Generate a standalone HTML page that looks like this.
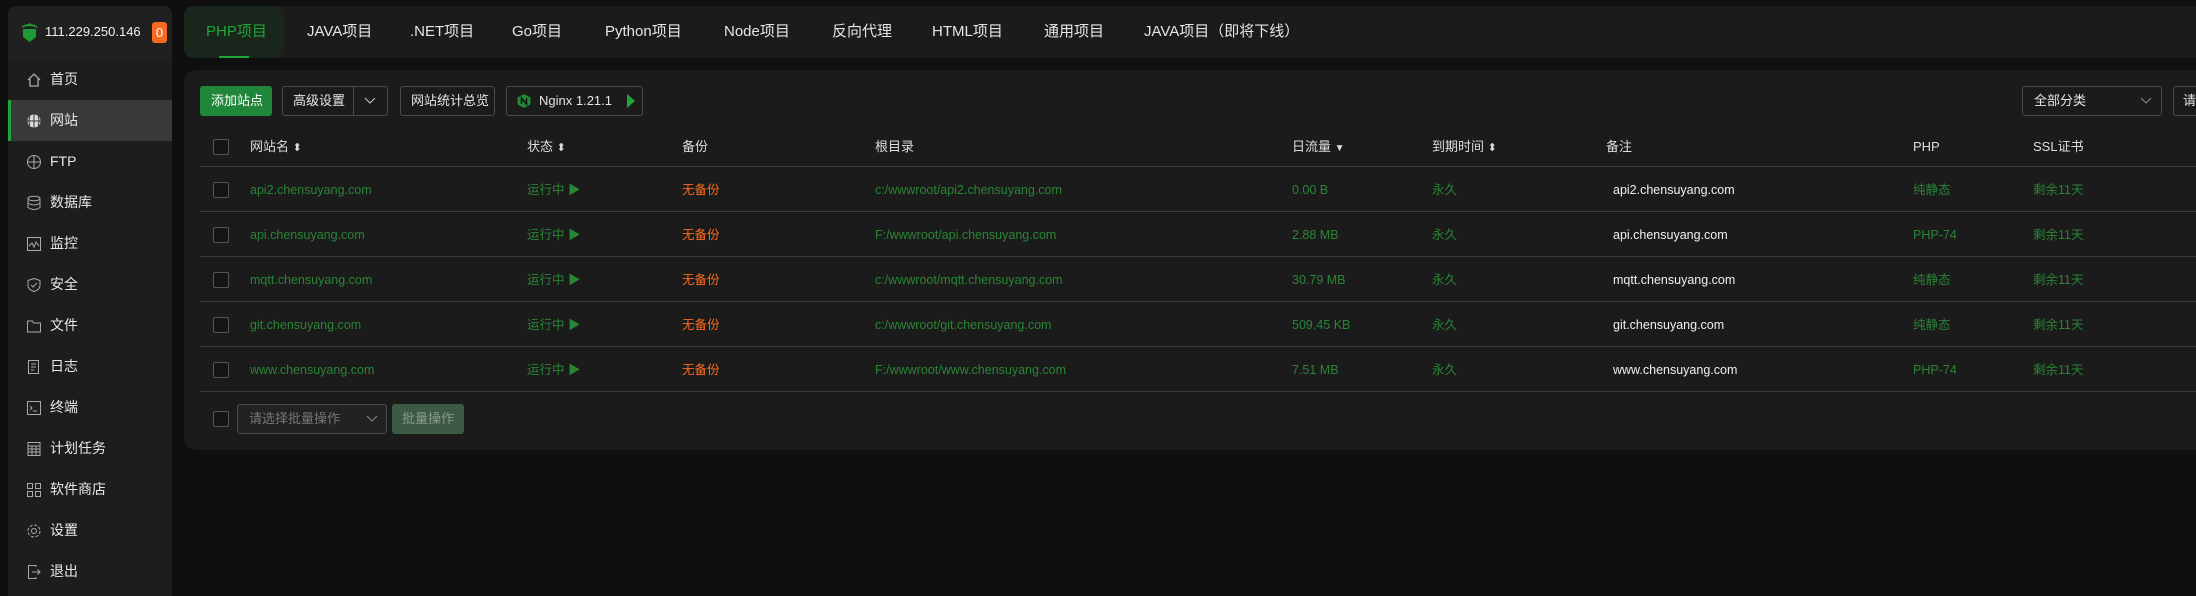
<!DOCTYPE html><html><head><meta charset="utf-8"><style>
*{margin:0;padding:0;box-sizing:border-box}
body{width:2196px;height:584px;background:#0f0f0f;font-family:"Liberation Sans","Noto Sans CJK SC",sans-serif;position:relative;overflow:hidden;color:#ddd}
.a{position:absolute;white-space:nowrap}
#sb{left:8px;top:6px;width:164px;height:590px;background:#1d1d1d;border-radius:8px 8px 0 0}
.mi{position:absolute;left:0;width:164px;height:41px;font-size:14px;color:#e8e8e8;line-height:41px;padding-left:42px}
.mi svg{position:absolute;left:18px;top:13px}
#tabs{left:184px;top:6px;width:2012px;height:52px;background:#1b1b1b;border-radius:10px 0 0 10px}
.tab{position:absolute;top:0;line-height:52px;font-size:15px;color:#e6e6e6}
#pn{left:184px;top:70px;width:2012px;height:380px;background:#1b1b1b;border-radius:12px 0 0 12px}
.btn{position:absolute;top:16px;height:30px;border:1px solid #4a4a4a;border-radius:3px;font-size:13px;line-height:28px;color:#e6e6e6;padding:0 10px}
.cb{position:absolute;left:29px;width:16px;height:16px;border:1px solid #555;border-radius:2px;background:#151515}
.hl{position:absolute;left:16px;right:0;height:1px;background:#3a3a3a}
.t{position:absolute;font-size:12.5px;line-height:16px;color:#2a8535}
.h{position:absolute;font-size:13px;line-height:16px;color:#ddd}
.o{color:#ff6a1c}.w{color:#f0f0f0}
</style></head><body>
<div class="a" id="sb">
<div class="a" style="left:0;top:0;width:164px;height:53px;background:#202020;border-radius:8px 8px 0 0"></div>
<svg class="a" style="left:13px;top:16px" width="17" height="21" viewBox="0 0 17 21"><path d="M2 7h13v8l-6.5 5L2 15z" fill="#1f9a35"/><path d="M1 5l7.5-3L16 5M3 3.5h11" stroke="#1f9a35" stroke-width="1.5" fill="none"/></svg>
<div class="a" style="left:37px;top:18px;font-size:13px;line-height:16px;color:#f0f0f0">111.229.250.146</div>
<div class="a" style="left:144px;top:16px;width:15px;height:21px;background:#f26a23;border-radius:3px;color:#fff;font-size:13px;text-align:center;line-height:21px">0</div>
<div class="mi" style="top:53px">首页<svg width="16" height="16"><path d="M2 8L8 2l6 6M4 7v7h8V7" stroke="#aaa" fill="none" stroke-width="1.3"/></svg></div>
<div class="mi" style="top:94px;background:#39393c;border-left:3px solid #20a53a;padding-left:39px">网站<svg style="left:15px" width="16" height="16"><circle cx="8" cy="8" r="6.5" fill="#ddd"/><path d="M8 1.5v13M1.5 8h13M4 3.5q-2 4.5 0 9M12 3.5q2 4.5 0 9" stroke="#333" fill="none"/></svg></div>
<div class="mi" style="top:135px">FTP<svg width="16" height="16"><circle cx="8" cy="8" r="6.5" fill="none" stroke="#aaa"/><path d="M8 1.5v13M1.5 8h13" stroke="#aaa"/></svg></div>
<div class="mi" style="top:176px">数据库<svg width="16" height="16"><ellipse cx="8" cy="3.5" rx="6" ry="2.3" fill="none" stroke="#aaa"/><path d="M2 3.5v9q6 4 12 0v-9M2 8q6 4 12 0" stroke="#aaa" fill="none"/></svg></div>
<div class="mi" style="top:217px">监控<svg width="16" height="16"><rect x="1.5" y="1.5" width="13" height="13" fill="none" stroke="#aaa"/><path d="M3 10l3-3 2 4 2-5 3 4" stroke="#aaa" fill="none"/></svg></div>
<div class="mi" style="top:258px">安全<svg width="16" height="16"><path d="M8 1.5l6 2v5q0 4-6 6-6-2-6-6v-5z M5 8l2 2 4-4" stroke="#aaa" fill="none"/></svg></div>
<div class="mi" style="top:299px">文件<svg width="16" height="16"><path d="M1.5 3h5l1 2h7v9h-13z" stroke="#aaa" fill="none"/></svg></div>
<div class="mi" style="top:340px">日志<svg width="16" height="16"><path d="M2.5 1.5h10v13h-10z M5 5h5M5 8h5M5 11h3" stroke="#aaa" fill="none"/></svg></div>
<div class="mi" style="top:381px">终端<svg width="16" height="16"><rect x="1.5" y="1.5" width="13" height="13" fill="none" stroke="#aaa"/><path d="M4 6l2 2-2 2M7 11h4" stroke="#aaa" fill="none"/></svg></div>
<div class="mi" style="top:422px">计划任务<svg width="16" height="16"><rect x="2" y="1.5" width="12" height="13" fill="none" stroke="#aaa"/><path d="M2 5h12M2 8h12M2 11h12M6 5v9M10 5v9" stroke="#aaa"/></svg></div>
<div class="mi" style="top:463px">软件商店<svg width="16" height="16"><path d="M1.5 1.5h5v5h-5zM9.5 1.5h5v5h-5zM1.5 9.5h5v5h-5zM9.5 9.5h5v5h-5z" stroke="#aaa" fill="none"/></svg></div>
<div class="mi" style="top:504px">设置<svg width="16" height="16"><circle cx="8" cy="8" r="2.5" fill="none" stroke="#aaa"/><circle cx="8" cy="8" r="6" fill="none" stroke="#aaa" stroke-dasharray="3 1.7"/></svg></div>
<div class="mi" style="top:545px">退出<svg width="16" height="16"><path d="M10 3V1.5H2.5v13H10V13M6 8h8M11.5 5.5L14 8l-2.5 2.5" stroke="#aaa" fill="none"/></svg></div>
</div>
<div class="a" id="tabs">
<div class="a" style="left:0;top:0;width:100px;height:52px;background:#1a261c;border-radius:10px"></div>
<div class="a" style="left:35px;top:50px;width:30px;height:2px;background:#20a53a"></div>
<div class="tab" style="left:22px;color:#20a53a">PHP项目</div>
<div class="tab" style="left:123px">JAVA项目</div>
<div class="tab" style="left:226px">.NET项目</div>
<div class="tab" style="left:328px">Go项目</div>
<div class="tab" style="left:421px">Python项目</div>
<div class="tab" style="left:540px">Node项目</div>
<div class="tab" style="left:648px">反向代理</div>
<div class="tab" style="left:748px">HTML项目</div>
<div class="tab" style="left:860px">通用项目</div>
<div class="tab" style="left:960px">JAVA项目（即将下线）</div>
</div>
<div class="a" id="pn">
<div class="btn" style="left:16px;width:72px;background:#20873a;border-color:#20873a;color:#fff">添加站点</div>
<div class="btn" style="left:98px;width:106px">高级设置<span style="position:absolute;left:70px;top:0;width:1px;height:28px;background:#4a4a4a"></span><svg style="position:absolute;left:81px;top:10px" width="12" height="8"><path d="M1 1l5 5 5-5" stroke="#ccc" fill="none"/></svg></div>
<div class="btn" style="left:216px;width:95px">网站统计总览</div>
<div class="btn" style="left:322px;width:137px;padding-left:32px">Nginx 1.21.1<svg style="position:absolute;left:10px;top:7px" width="14" height="14"><path d="M7 0l6.5 3.5v7L7 14 .5 10.5v-7z" fill="#1e8a36"/><path d="M4.5 10V4l5 6V4" stroke="#111" stroke-width="1.5" fill="none"/></svg><svg style="position:absolute;left:120px;top:7px" width="8" height="14"><path d="M0 0l8 7-8 7z" fill="#20a53a"/></svg></div>
<div class="btn" style="left:1838px;width:140px;padding-left:11px">全部分类<svg style="position:absolute;left:117px;top:10px" width="12" height="8"><path d="M1 1l5 5 5-5" stroke="#888" fill="none"/></svg></div>
<div class="btn" style="left:1989px;width:60px;padding-left:9px">请</div>
<div class="cb" style="top:69px"></div>
<div class="h" style="left:66px;top:69px">网站名 <span style="font-size:11px">⬍</span></div>
<div class="h" style="left:343px;top:69px">状态 <span style="font-size:11px">⬍</span></div>
<div class="h" style="left:498px;top:69px">备份</div>
<div class="h" style="left:691px;top:69px">根目录</div>
<div class="h" style="left:1108px;top:69px">日流量 <span style="font-size:10px">▼</span></div>
<div class="h" style="left:1248px;top:69px">到期时间 <span style="font-size:11px">⬍</span></div>
<div class="h" style="left:1422px;top:69px">备注</div>
<div class="h" style="left:1729px;top:69px">PHP</div>
<div class="h" style="left:1849px;top:69px">SSL证书</div>
<div class="hl" style="top:96px"></div>
<div class="hl" style="top:141px"></div>
<div class="hl" style="top:186px"></div>
<div class="hl" style="top:231px"></div>
<div class="hl" style="top:276px"></div>
<div class="hl" style="top:321px"></div>
<div class="cb" style="top:112px"></div><div class="t" style="left:66px;top:112px">api2.chensuyang.com</div><div class="t" style="left:343px;top:112px">运行中 ▶</div><div class="t o" style="left:498px;top:112px">无备份</div><div class="t" style="left:691px;top:112px">c:/wwwroot/api2.chensuyang.com</div><div class="t" style="left:1108px;top:112px">0.00 B</div><div class="t" style="left:1248px;top:112px">永久</div><div class="t w" style="left:1429px;top:112px">api2.chensuyang.com</div><div class="t" style="left:1729px;top:112px">纯静态</div><div class="t" style="left:1849px;top:112px">剩余11天</div>
<div class="cb" style="top:157px"></div><div class="t" style="left:66px;top:157px">api.chensuyang.com</div><div class="t" style="left:343px;top:157px">运行中 ▶</div><div class="t o" style="left:498px;top:157px">无备份</div><div class="t" style="left:691px;top:157px">F:/wwwroot/api.chensuyang.com</div><div class="t" style="left:1108px;top:157px">2.88 MB</div><div class="t" style="left:1248px;top:157px">永久</div><div class="t w" style="left:1429px;top:157px">api.chensuyang.com</div><div class="t" style="left:1729px;top:157px">PHP-74</div><div class="t" style="left:1849px;top:157px">剩余11天</div>
<div class="cb" style="top:202px"></div><div class="t" style="left:66px;top:202px">mqtt.chensuyang.com</div><div class="t" style="left:343px;top:202px">运行中 ▶</div><div class="t o" style="left:498px;top:202px">无备份</div><div class="t" style="left:691px;top:202px">c:/wwwroot/mqtt.chensuyang.com</div><div class="t" style="left:1108px;top:202px">30.79 MB</div><div class="t" style="left:1248px;top:202px">永久</div><div class="t w" style="left:1429px;top:202px">mqtt.chensuyang.com</div><div class="t" style="left:1729px;top:202px">纯静态</div><div class="t" style="left:1849px;top:202px">剩余11天</div>
<div class="cb" style="top:247px"></div><div class="t" style="left:66px;top:247px">git.chensuyang.com</div><div class="t" style="left:343px;top:247px">运行中 ▶</div><div class="t o" style="left:498px;top:247px">无备份</div><div class="t" style="left:691px;top:247px">c:/wwwroot/git.chensuyang.com</div><div class="t" style="left:1108px;top:247px">509.45 KB</div><div class="t" style="left:1248px;top:247px">永久</div><div class="t w" style="left:1429px;top:247px">git.chensuyang.com</div><div class="t" style="left:1729px;top:247px">纯静态</div><div class="t" style="left:1849px;top:247px">剩余11天</div>
<div class="cb" style="top:292px"></div><div class="t" style="left:66px;top:292px">www.chensuyang.com</div><div class="t" style="left:343px;top:292px">运行中 ▶</div><div class="t o" style="left:498px;top:292px">无备份</div><div class="t" style="left:691px;top:292px">F:/wwwroot/www.chensuyang.com</div><div class="t" style="left:1108px;top:292px">7.51 MB</div><div class="t" style="left:1248px;top:292px">永久</div><div class="t w" style="left:1429px;top:292px">www.chensuyang.com</div><div class="t" style="left:1729px;top:292px">PHP-74</div><div class="t" style="left:1849px;top:292px">剩余11天</div>
<div class="cb" style="top:341px"></div>
<div class="a" style="left:53px;top:334px;width:150px;height:30px;border:1px solid #4a4a4a;border-radius:3px;background:#222;font-size:13px;color:#777;line-height:28px;padding-left:11px">请选择批量操作<svg style="position:absolute;left:128px;top:10px" width="12" height="8"><path d="M1 1l5 5 5-5" stroke="#888" fill="none"/></svg></div>
<div class="a" style="left:208px;top:334px;width:72px;height:30px;background:#3d5a45;border-radius:3px;font-size:13px;color:#8a9a8e;line-height:30px;text-align:center">批量操作</div>
</div>
</body></html>
